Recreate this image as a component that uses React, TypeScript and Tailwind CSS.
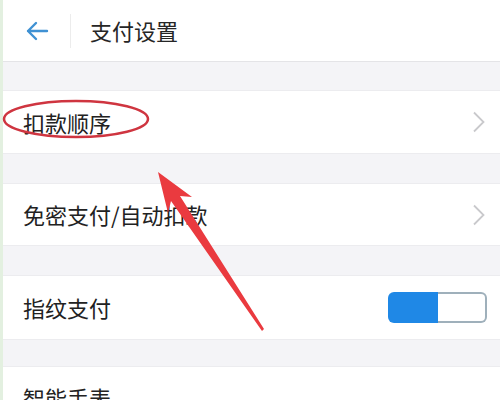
import React from 'react';

const font = { fontFamily: '"Noto Sans CJK SC", "Noto Sans", sans-serif' };

function Chevron() {
  return (
    <svg width="14" height="22" viewBox="0 0 14 22" className="mr-[14px]">
      <path d="M2 1.5 L11.5 11 L2 20.5" fill="none" stroke="#c9c9cc" strokeWidth="1.8" />
    </svg>
  );
}

function Toggle() {
  return (
    <div className="mr-[13px] flex h-[31px] w-[99px]">
      <div className="w-[50px] rounded-l-[6px] bg-[#1f88e6]" />
      <div className="flex-1 rounded-r-[6px] border-2 border-l-0 border-[#9fb0bb] bg-white" />
    </div>
  );
}

function Row({ label, right, h }: { label: string; right: React.ReactNode; h: string }) {
  return (
    <div className={`flex ${h} shrink-0 items-center justify-between border-y border-[#ececef] bg-white pl-[20px]`}>
      <span className="text-[22px] text-[#222]">{label}</span>
      {right}
    </div>
  );
}

export default function App() {
  return (
    <div className="relative flex h-[400px] w-[500px] overflow-hidden bg-[#f4f4f7]" style={font}>
      <div className="w-[3px] shrink-0 bg-[#e3f0e0]" />
      <div className="flex flex-1 flex-col">
        <div className="flex h-[62px] shrink-0 items-center border-b border-[#e4e4e7] bg-white">
          <svg width="24" height="20" viewBox="0 0 24 20" className="ml-[22px]">
            <path d="M22 10 H3 M11 2 L3 10 L11 18" fill="none" stroke="#3f91d3" strokeWidth="2.4" strokeLinecap="round" strokeLinejoin="round" />
          </svg>
          <div className="ml-[21px] h-[34px] w-px bg-[#ececec]" />
          <span className="ml-[19px] text-[22px] text-[#262626]">支付设置</span>
        </div>
        <div className="h-[28px] shrink-0" />
        <Row label="扣款顺序" right={<Chevron />} h="h-[64px]" />
        <div className="h-[29px] shrink-0" />
        <Row label="免密支付/自动扣款" right={<Chevron />} h="h-[63px]" />
        <div className="h-[29px] shrink-0" />
        <Row label="指纹支付" right={<Toggle />} h="h-[65px]" />
        <div className="h-[26px] shrink-0" />
        <div className="flex h-[60px] shrink-0 items-start border-t border-[#ececef] bg-white pl-[20px] pt-[14px]">
          <span className="text-[22px] text-[#222]">智能手表</span>
        </div>
      </div>
      <svg className="pointer-events-none absolute inset-0" width="500" height="400" viewBox="0 0 500 400">
        <ellipse cx="76" cy="119" rx="72" ry="18" fill="none" stroke="#cf3540" strokeWidth="2.5" />
        <polygon
          points="158,172 192,197 180,196 264,329 262,331 171,201 168,213"
          fill="#ea3a3f"
        />
      </svg>
    </div>
  );
}
